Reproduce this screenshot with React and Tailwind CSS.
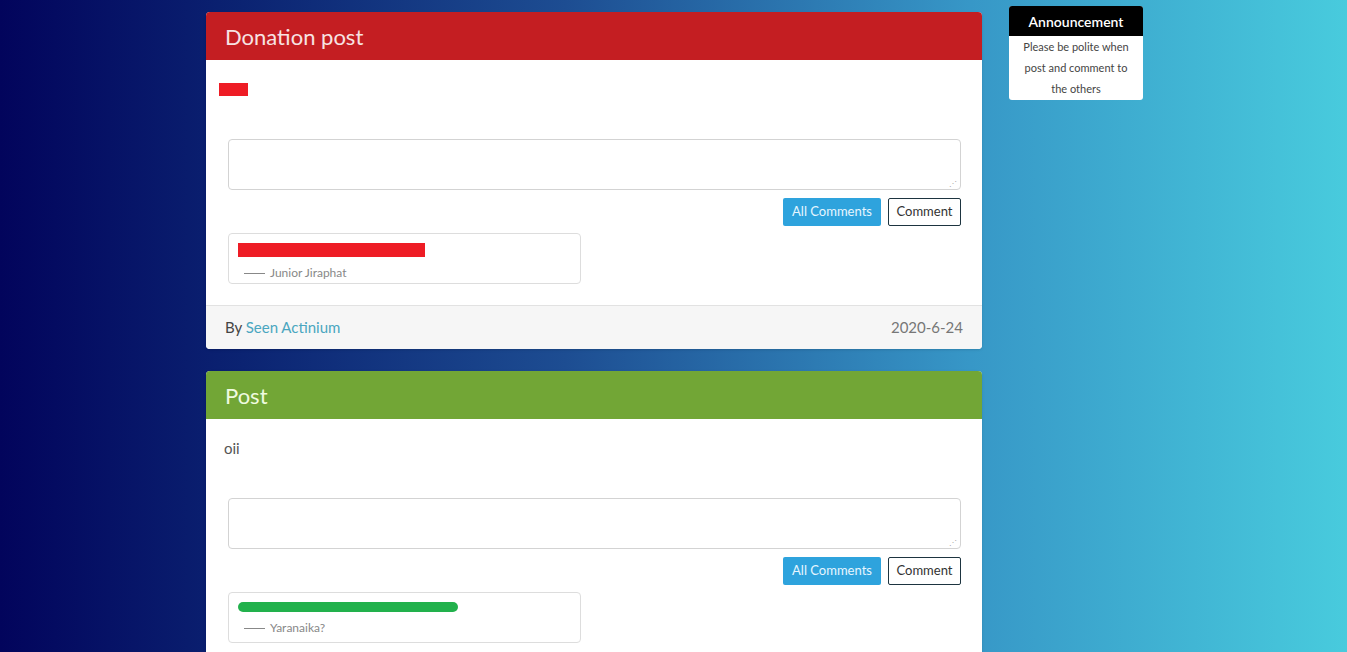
import React from 'react';

const POSTS = [
  {
    id: 1,
    title: 'Donation post',
    header: 'bg-[#c41e22] text-[#f7e3e3]',
    comment: { bar: 'bg-[#ee1c25] w-[187px] h-[14px]', author: 'Junior Jiraphat' },
    redacted: true,
    by: 'Seen Actinium',
    date: '2020-6-24',
  },
  {
    id: 2,
    title: 'Post',
    header: 'bg-[#72a636] text-[#effbe0]',
    body: 'oii',
    comment: { bar: 'bg-[#22b14c] w-[220px] h-[10px] rounded-full', author: 'Yaranaika?' },
  },
];

const PostCard = ({ post }) => (
  <div className="bg-white rounded-[4px] overflow-hidden shadow-sm w-[776px] shrink-0">
    <div className={`h-[48px] flex items-center px-[19px] text-[22px] ${post.header}`}>
      {post.title}
    </div>
    <div className="px-[18px] pt-[17px] pb-[21px]">
      <div className="h-[24px] flex items-center text-[15px] text-[#555]">
        {post.redacted ? <div className="w-[29px] h-[13px] bg-[#ee1c25] -ml-[5px]" /> : post.body}
      </div>
      <div className="pl-[4px] pr-[3px]">
        <div className="mt-[38px] h-[51px] border border-[#d3d3d3] rounded-[4px] relative">
          <span className="absolute right-[3px] bottom-[2px] text-[8px] leading-none text-[#aaa]">⋰</span>
        </div>
        <div className="mt-[8px] flex justify-end gap-[7px]">
          <button className="h-[28px] w-[98px] bg-[#2ea3dd] text-[#e6f6ff] text-[13px] rounded-[2px]">All Comments</button>
          <button className="h-[28px] w-[73px] border border-[#1d3440] text-[#333] text-[13px] rounded-[2px]">Comment</button>
        </div>
        <div className="mt-[7px] w-[353px] h-[51px] border border-[#ddd] rounded-[4px] pl-[9px] pt-[9px]">
          <div className={post.comment.bar} />
          <div className="mt-[7px] flex items-center text-[12px] text-[#888]">
            <span className="w-[21px] h-px bg-[#888] ml-[6px] mr-[5px]" />
            {post.comment.author}
          </div>
        </div>
      </div>
    </div>
    {post.by && (
      <div className="h-[44px] bg-[#f6f6f6] border-t border-[#e2e2e2] px-[19px] flex items-center justify-between text-[15px]">
        <span className="text-[#444]">
          By <span className="text-[#4aa6c0]">{post.by}</span>
        </span>
        <span className="text-[#777]">{post.date}</span>
      </div>
    )}
  </div>
);

export default function App() {
  return (
    <div
      className="h-[652px] overflow-hidden bg-[linear-gradient(to_right,#02045c_0%,#0b2372_18%,#1d4d92_42%,#3797c7_72%,#48cbdd_100%)] flex items-start"
      style={{ fontFamily: 'Lato, "Noto Sans", sans-serif' }}
    >
      <div className="ml-[206px] mt-[12px] flex flex-col gap-[22px]">
        {POSTS.map((p) => (
          <PostCard key={p.id} post={p} />
        ))}
      </div>
      <div className="ml-[27px] mt-[6px] w-[134px] rounded-[3px] overflow-hidden bg-white">
        <div className="h-[30px] bg-black text-white text-[14px] font-semibold flex items-center justify-center">
          Announcement
        </div>
        <div className="px-[8px] pb-[1px] text-center text-[11px] leading-[21px] text-[#444]">
          Please be polite when post and comment to the others
        </div>
      </div>
    </div>
  );
}
